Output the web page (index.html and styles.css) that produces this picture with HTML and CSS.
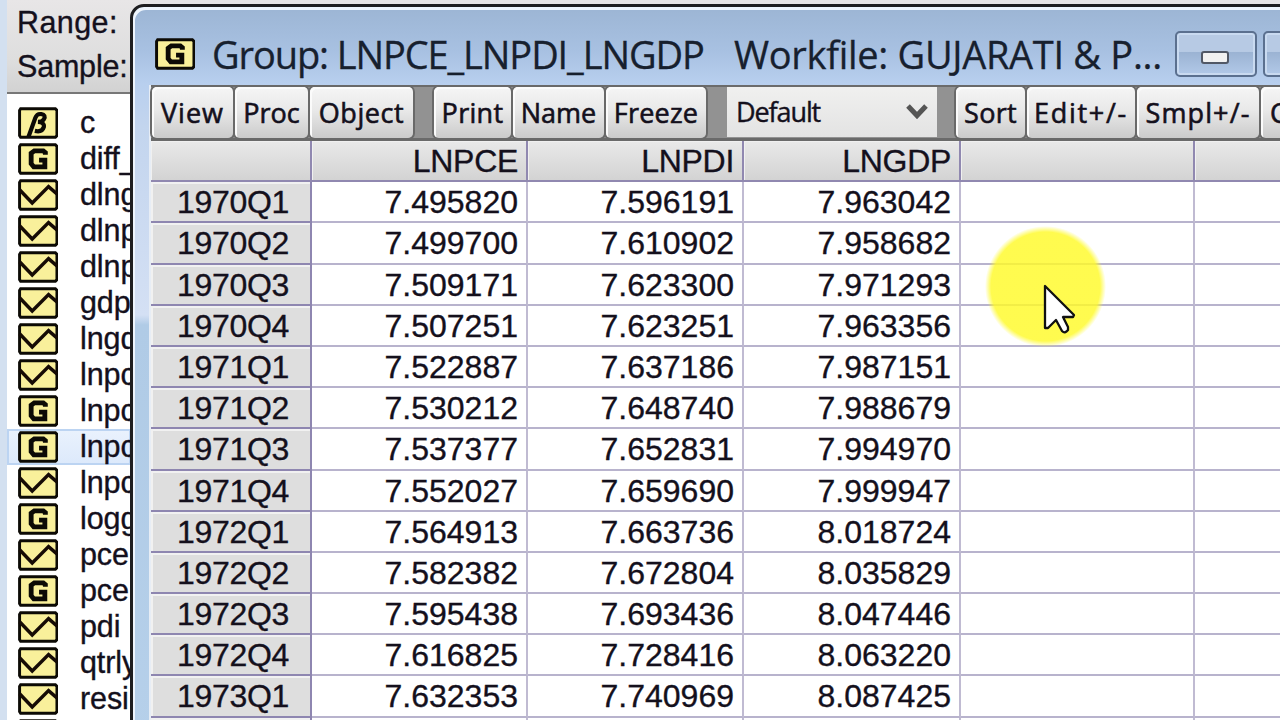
FILE: index.html
```
<!DOCTYPE html>
<html lang="en">
<head>
<meta charset="utf-8">
<title>Group: LNPCE_LNPDI_LNGDP</title>
<link rel="stylesheet" href="styles.css">
<script src="grid.js" defer></script>
</head>
<body>
<svg class="defs" width="0" height="0">
  <defs>
    <g id="box"><path d="M2.500 1.500H35.500L37 3V27L35.500 28.500H2.500L1.500 27V3Z" fill="#f9f09b" stroke="#0c0a05" stroke-width="2.800"/></g>
    <g id="series"><use href="#box"/><path d="M1.500 10L13.500 22.500L29 7L37 14" fill="none" stroke="#160b05" stroke-width="3.300"/></g>
    <g id="group"><use href="#box"/><path d="M26 11V9L24 7.300H15.500L12.500 9.500V19.500L15 22.500H25.500V16H20" fill="none" stroke="#0c0a05" stroke-width="4.600"/></g>
    <g id="beta"><use href="#box"/><path d="M10 28L16.500 10Q18 6 22 6.500Q27 7.500 24.500 11.500Q23 14 19 14Q25.500 14.500 24.500 19Q23 24 16 22.500" fill="none" stroke="#0c0a05" stroke-width="4"/></g>
  </defs>
</svg>
<div class="screen">
  <aside class="workfile">
    <div class="info"><div>Range:</div><div>Sample:</div></div>
    <ul class="objects" id="objects"></ul>
  </aside>
  <main class="window">
    <header class="titlebar">
      <svg class="icon" viewBox="0 0 38 30"><use href="#group"/></svg>
      <span class="title name">Group: LNPCE_LNPDI_LNGDP</span>
      <span class="title file">Workfile: GUJARATI &amp; P...</span>
      <span class="winbtn"><i class="dash"></i></span>
      <span class="winbtn"></span>
    </header>
    <section class="client">
      <nav class="toolbar">
        <span class="btn w-view"><b>View</b></span>
        <span class="btn w-proc"><b>Proc</b></span>
        <span class="btn w-object"><b>Object</b></span>
        <span class="gap"></span>
        <span class="btn w-print"><b>Print</b></span>
        <span class="btn w-name"><b>Name</b></span>
        <span class="btn w-freeze"><b>Freeze</b></span>
        <span class="gap"></span>
        <span class="select"><span>Default</span><svg width="22" height="18" viewBox="0 0 22 18"><path d="M2 3L11 12.500L20 3" fill="none" stroke="#555" stroke-width="5"/></svg></span>
        <span class="gap"></span>
        <span class="btn w-sort"><b>Sort</b></span>
        <span class="btn w-edit"><b>Edit+/-</b></span>
        <span class="btn w-smpl"><b>Smpl+/-</b></span>
        <span class="btn w-compare"><b>C</b></span>
      </nav>
      <div class="sheet" id="sheet">
        <div class="row head"><span></span><span>LNPCE</span><span>LNPDI</span><span>LNGDP</span><span></span><span></span></div>
      </div>
    </section>
  </main>
  <div class="halo"></div>
  <svg class="pointer" width="34" height="52" viewBox="0 0 34 52"><path d="M2 2V44L5 44L13 36L19 47Q22 50 25 46V43L20 33H30L31 31Z" fill="#fff" stroke="#111" stroke-width="2.300" stroke-linejoin="round"/></svg>
</div>
</body>
</html>
```
FILE: styles.css
```
* { box-sizing: border-box; }
body { margin: 0; overflow: hidden; font-family: "Liberation Sans", Arial, sans-serif; color: #14101c; }
.defs { position: absolute; }
.screen { position: relative; width: 1280px; height: 720px; overflow: hidden; background: #e6e4e5; }
.workfile { width: 150px; height: 720px; border-left: 7px solid #d3e0f0; background: #fff; -webkit-text-stroke: .35px #14101c; }
.info { height: 94px; padding: 0 0 0 10px; border-bottom: 2px solid #777; background: linear-gradient(#e8e6e7, #dedede 65%, #d2d2d2); font-size: 30.5px; line-height: 44px; letter-spacing: .4px; white-space: nowrap; }
.info div + div { letter-spacing: -.2px; }
.objects { list-style: none; margin: 0; padding: 11px 0 0; width: 124px; font-size: 30.5px; letter-spacing: -.1px; }
.objects li { display: flex; align-items: center; height: 36px; padding-left: 11px; gap: 22px; line-height: 36px; white-space: nowrap; overflow: hidden; }
.objects svg { width: 40px; height: 32px; flex: none; margin-top: -1px; }
.objects span { position: relative; top: -1px; }
.objects .hot { background: linear-gradient(#eaf2fd, #dce9fb); box-shadow: inset 0 0 0 2px #bcd4f2; }
.window { position: absolute; left: 130px; top: 4px; width: 1200px; height: 760px; border: 3px solid #1e1e20; border-radius: 14px 0 0 0; box-shadow: inset 2px 3px 0 #eef5fd; padding: 3px 0 0 2px; background: linear-gradient(#9cb5d4, #a8c1e2 45px, #b8cfee 76px, #c3d5ee 120px, #d4e0f4 308px, #b0cbe6 318px, #b6d0ea); background-clip: padding-box; overflow: hidden; }
.titlebar { height: 75px; width: 1145px; display: flex; align-items: flex-start; }
.titlebar .icon { width: 40px; height: 32px; margin: 28px 0 0 20px; flex: none; }
.title { font-family: "Open Sans", "Noto Sans", sans-serif; font-size: 38px; line-height: 50px; margin-top: 19px; white-space: pre; flex: none; color: #17202e; -webkit-text-stroke: .3px #17202e; }
.name { width: 522px; margin-left: 17px; letter-spacing: -1.1px; }
.file { width: 441px; letter-spacing: -.3px; }
.winbtn { width: 82px; height: 46px; margin: 21px 6px 0 0; flex: none; border: 2px solid #5b708f; border-radius: 5px; box-shadow: inset 0 0 0 2px #c9daf0; background: linear-gradient(#b7cae4 0 44%, #9bb3d3 46%, #b2c9e8); display: flex; align-items: center; justify-content: center; }
.dash { width: 28px; height: 13px; margin: 6px 0 0 -3px; border: 2px solid #515866; border-radius: 3px; background: #f1f1f1; }
.client { width: 1135px; height: 640px; margin-left: 14px; border-left: 2px solid #e7edf5; }
.toolbar { display: flex; width: 1250px; height: 56px; padding: 0 0 0 1px; background: #929292; border-top: 2px solid #6b6b6b; border-bottom: 3px solid #6a6a6a; }
.btn { height: 51px; flex: none; margin-right: 2px; border-radius: 5px; background: linear-gradient(#f5f5f5, #e9e9e9 45%, #cbcbcb); box-shadow: 0 0 0 2px #696969, inset 2px 2px 0 #fbfbfb; display: flex; justify-content: center; align-items: center; overflow: hidden; white-space: nowrap; }
.btn b { font: 400 27px/40px "Open Sans", "Noto Sans", sans-serif; -webkit-text-stroke: .6px #14101c; }
.w-view { width: 81px; letter-spacing: 1px; }
.w-proc { width: 73px; }
.w-object { width: 103px; letter-spacing: .6px; }
.w-print { width: 77px; letter-spacing: .3px; }
.w-name { width: 91px; }
.w-freeze { width: 100px; letter-spacing: .2px; }
.w-sort { width: 69px; letter-spacing: .3px; }
.w-edit { width: 108px; letter-spacing: 1.7px; }
.w-smpl { width: 122px; letter-spacing: 1.1px; }
.w-compare { width: 60px; justify-content: flex-start; padding-left: 9px; }
.gap { flex: none; width: 19px; }
.select { width: 210px; height: 50px; flex: none; background: linear-gradient(#f0f0ef, #e3e3e3); display: flex; justify-content: space-between; align-items: center; padding: 0 9px; font: 27px "Open Sans", sans-serif; letter-spacing: -1.1px; -webkit-text-stroke: .4px #14101c; }
.select span { margin-top: -2px; }
.sheet { width: 1240px; background: #fff; }
.row { display: grid; grid-template-columns: 161px 216px 216px 217px 234px 190px; height: 41.2px; }
.row span { border-right: 2px solid #c0bbd2; border-bottom: 2px solid #b8b3cd; padding-right: 8px; font-size: 32px; line-height: 41px; text-align: right; white-space: nowrap; height: 41.2px; -webkit-text-stroke: .35px #14101c; }
.row span:first-child { background: #dedede; border-color: #8e86b0; text-align: center; padding: 0 0 0 5px; letter-spacing: -.3px; box-shadow: inset 2px 2px 0 #f1f1f1; }
.head span, .head span:first-child { background: linear-gradient(#e9e9e9, #d3d3d3); border-color: #9088b0; box-shadow: inset 1px 1px 0 #f0f0f0; letter-spacing: -.3px; }
.halo { position: absolute; left: 985px; top: 226px; width: 121px; height: 121px; border-radius: 50%; background: radial-gradient(circle closest-side, rgba(255, 250, 40, .82) 90%, rgba(255, 250, 40, 0)); }
.pointer { position: absolute; left: 1043px; top: 284px; }
```
FILE: grid.js
```
const objects = [
  ["beta", "c"], ["group", "diff_"], ["series", "dlng"], ["series", "dlnp"], ["series", "dlnp"],
  ["series", "gdp"], ["series", "lngd"], ["series", "lnpc"], ["group", "lnpc"],
  ["group", "lnpc", "hot"], ["series", "lnpc"], ["group", "logg"], ["series", "pce"],
  ["group", "pce"], ["series", "pdi"], ["series", "qtrly"], ["series", "resi"], ["series", ""]
];
document.getElementById("objects").innerHTML = objects.map(([kind, name, state = ""]) =>
  `<li class="${state}"><svg viewBox="0 0 38 30"><use href="#${kind}"/></svg><span>${name}</span></li>`).join("");

const data = `1970Q1 7.495820 7.596191 7.963042
1970Q2 7.499700 7.610902 7.958682
1970Q3 7.509171 7.623300 7.971293
1970Q4 7.507251 7.623251 7.963356
1971Q1 7.522887 7.637186 7.987151
1971Q2 7.530212 7.648740 7.988679
1971Q3 7.537377 7.652831 7.994970
1971Q4 7.552027 7.659690 7.999947
1972Q1 7.564913 7.663736 8.018724
1972Q2 7.582382 7.672804 8.035829
1972Q3 7.595438 7.693436 8.047446
1972Q4 7.616825 7.728416 8.063220
1973Q1 7.632353 7.740969 8.087425`;
const rows = data.split("\n").map(line => line.split(" "));
rows.push(["", "", "", ""]);
document.getElementById("sheet").insertAdjacentHTML("beforeend", rows.map(cells =>
  `<div class="row">${[...cells, "", ""].map(c => `<span>${c}</span>`).join("")}</div>`).join(""));
```
